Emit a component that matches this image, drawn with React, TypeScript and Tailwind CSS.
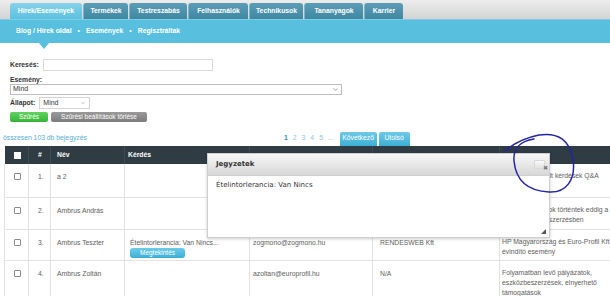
import { ChevronDown } from 'lucide-react'

const tabs = [
  { label: 'Hírek/Események', w: 'w-[72px]', active: true },
  { label: 'Termékek', w: 'w-[45px]' },
  { label: 'Testreszabás', w: 'w-[58px]' },
  { label: 'Felhasználók', w: 'w-[60px]' },
  { label: 'Technikusok', w: 'w-[54px]' },
  { label: 'Tananyagok', w: 'w-[59px]' },
  { label: 'Karrier', w: 'w-[39px]' },
]

const rows = [
  { n: '1.', name: 'a 2', q: '', email: '', company: '', topic: 'Gyakran ismételt kérdések Q&A', h: 'h-[33px]' },
  { n: '2.', name: 'Ambrus András', q: '', email: '', company: '', topic: 'Milyen változások történtek eddig a hazai eszközbeszerzésben', h: 'h-[32px]' },
  { n: '3.', name: 'Ambrus Teszter', q: 'Ételintorlerancia: Van Nincs...', email: 'zogmono@zogmono.hu', company: 'RENDESWEB Kft', topic: 'HP Magyarország és Euro-Profil Kft évindító esemény', h: 'h-[31px]', btn: true },
  { n: '4.', name: 'Ambrus Zoltán', q: '', email: 'azoltan@europrofil.hu', company: 'N/A', topic: 'Folyamatban levő pályázatok, eszközbeszerzések, elnyerhető támogatások', h: 'h-[33px]' },
  { n: '', name: '', q: '', email: '', company: '', topic: '', h: 'h-[33px]' },
]

function Checkbox({ white }: { white?: boolean }) {
  return (
    <span
      className={
        white
          ? 'block w-[7px] h-[7px] bg-white'
          : 'block w-[7px] h-[7px] border border-[#8a8a8a] rounded-[1px] bg-white'
      }
    />
  )
}

export default function App() {
  return (
    <div className="relative w-[610px] h-[296px] overflow-hidden bg-white text-[#444] font-['Liberation_Sans',Arial,sans-serif]">
      {/* top tab strip */}
      <div className="h-[19px] bg-gradient-to-b from-[#ededed] to-[#d2d3d4] flex items-end pl-[10px] gap-[1px]">
        {tabs.map(t => (
          <div
            key={t.label}
            className={
              (t.active
                ? 'bg-gradient-to-b from-[#86d3ea] to-[#5bc0de] '
                : 'bg-gradient-to-b from-[#5b9db6] to-[#3f87a2] border-l border-[#7fb3c6] ') +
              t.w +
              ' h-[16px] rounded-t-[3px] flex items-center justify-center text-white font-bold text-[6.8px]'
            }
          >
            {t.label}
          </div>
        ))}
      </div>

      {/* sub navigation */}
      <div className="relative h-[24px] bg-[#59bfdf] border-t border-[#7dcfe8] flex items-center pl-[16px] gap-[6px] text-white font-bold text-[6.8px]">
        <span>Blog / Hírek oldal</span>
        <span>•</span>
        <span>Események</span>
        <span>•</span>
        <span>Regisztráltak</span>
        <span className="absolute left-[39px] top-[23px] w-0 h-0 border-l-[5px] border-r-[5px] border-t-[6px] border-l-transparent border-r-transparent border-t-[#59bfdf]" />
      </div>

      {/* filters */}
      <div className="pl-[10px] pt-[16px] text-[6.8px] text-[#333]">
        <div className="flex items-center gap-[4px] h-[12px]">
          <span className="font-bold">Keresés:</span>
          <div className="w-[170px] h-[12px] border border-[#d9d9d9]" />
        </div>
        <div className="font-bold mt-[4px] leading-[9px]">Esemény:</div>
        <div className="w-[332px] h-[11px] border border-[#bdbdbd] flex items-center justify-between px-[2px] text-[7px] text-[#333]">
          <span>Mind</span>
          <ChevronDown size={7} strokeWidth={2} className="text-[#666]" />
        </div>
        <div className="flex items-center gap-[4px] mt-[2px] h-[12px]">
          <span className="font-bold">Állapot:</span>
          <div className="w-[51px] h-[12px] border border-[#d4d4d4] flex items-center justify-between px-[3px] text-[7px]">
            <span>Mind</span>
            <ChevronDown size={6} strokeWidth={2} className="text-[#888]" />
          </div>
        </div>
        <div className="flex items-center gap-[3px] mt-[3px]">
          <div className="w-[38px] h-[10px] rounded-[2px] bg-gradient-to-b from-[#5fd35f] to-[#37b437] text-white flex items-center justify-center text-[6.5px]">
            Szűrés
          </div>
          <div className="w-[96px] h-[10px] rounded-[2px] bg-gradient-to-b from-[#9a9a9a] to-[#7c7c7c] text-white flex items-center justify-center text-[6.5px]">
            Szűrési beállítások törlése
          </div>
        </div>
      </div>

      {/* count + pagination */}
      <div className="flex items-center h-[15px] mt-[9px] pl-[3px] text-[6.8px]">
        <span className="text-[#5aaed3] w-[281px]">összesen 103 db bejegyzés</span>
        <div className="flex items-center gap-[5px] text-[#8ac6e3]">
          <span className="text-[#2a8ac4] font-bold">1</span>
          <span>2</span>
          <span>3</span>
          <span>4</span>
          <span>5</span>
          <span>...</span>
        </div>
        <div className="ml-[6px] flex gap-[2px]">
          <div className="w-[37px] h-[14px] rounded-t-[2px] bg-gradient-to-b from-[#6fcae6] to-[#3aafd6] text-white flex items-center justify-center">
            Következő
          </div>
          <div className="w-[31px] h-[14px] rounded-t-[2px] bg-gradient-to-b from-[#6fcae6] to-[#3aafd6] text-white flex items-center justify-center">
            Utolsó
          </div>
        </div>
      </div>

      {/* table */}
      <div className="pl-[4px]">
        <table className="table-fixed w-[625px] border-collapse text-[6.8px] text-[#5e5e5e]">
          <colgroup>
            <col className="w-[24px]" />
            <col className="w-[22px]" />
            <col className="w-[74px]" />
            <col className="w-[125px]" />
            <col className="w-[123px]" />
            <col className="w-[127px]" />
            <col className="w-[130px]" />
          </colgroup>
          <thead>
            <tr className="h-[18px] bg-[#2f3c43] text-white font-bold text-left">
              <th className="pl-[9px] border-r border-[#3d4b52]"><Checkbox white /></th>
              <th className="pl-[9px] border-r border-[#3d4b52]">#</th>
              <th className="pl-[6px] border-r border-[#3d4b52]">Név</th>
              <th className="pl-[3px] border-r border-[#3d4b52]">Kérdés</th>
              <th className="border-r border-[#3d4b52]"></th>
              <th className="border-r border-[#3d4b52]"></th>
              <th></th>
            </tr>
          </thead>
          <tbody>
            {rows.map((r, i) => (
              <tr key={i} className={r.h + ' border-b border-[#e2e2e2] align-top'}>
                <td className="pl-[9px] pt-[9px] border-l border-r border-[#e2e2e2]"><Checkbox /></td>
                <td className="pl-[9px] pt-[8px] border-r border-[#e2e2e2] text-[#5e5e5e]">{r.n}</td>
                <td className="pl-[6px] pt-[8px] border-r border-[#e2e2e2] text-[#5e5e5e]">{r.name}</td>
                <td className="pl-[5px] pt-[8px] border-r border-[#e2e2e2] text-[#5e5e5e]">
                  {r.q && <div className="leading-[9px]">{r.q}</div>}
                  {r.btn && (
                    <div className="mt-[1px] w-[55px] h-[10px] rounded-[3px] bg-gradient-to-b from-[#6ccbe8] to-[#3aafd6] text-white flex items-center justify-center text-[6.5px]">
                      Megtekintés
                    </div>
                  )}
                </td>
                <td className="pl-[3px] pt-[8px] border-r border-[#e2e2e2] text-[#5e5e5e]">{r.email}</td>
                <td className="pl-[7px] pt-[8px] border-r border-[#e2e2e2] text-[#5e5e5e]">{r.company}</td>
                <td className="pl-[2px] pt-[7px] pr-[4px] leading-[10px] text-[#5e5e5e]">{r.topic}</td>
              </tr>
            ))}
          </tbody>
        </table>
      </div>

      {/* notes dialog */}
      <div className="absolute left-[207px] top-[153px] w-[343px] h-[85px] bg-white border border-[#cfcfcf] shadow-[0_1px_3px_rgba(0,0,0,0.2)] font-['DejaVu_Sans',Verdana,sans-serif]">
        <div className="relative h-[22px] bg-gradient-to-b from-[#f7f7f7] to-[#d8d8d8] border-b border-[#d0d0d0] flex items-center pl-[8px] text-[7px] font-bold text-[#333]">
          Jegyzetek
          <div className="absolute right-[4px] top-[6px] w-[11px] h-[9px] rounded-[1px] bg-gradient-to-b from-[#fafafa] to-[#e2e2e2] border border-[#d8d8d8]" />
          <span className="absolute right-[1px] top-[11px] text-[6px] leading-none text-[#777]">✖</span>
        </div>
        <div className="pl-[8px] pt-[4px] text-[7px] text-[#333]">Ételintorlerancia: Van Nincs</div>
        <svg className="absolute right-[3px] bottom-[3px]" width="5" height="5" viewBox="0 0 5 5">
          <path d="M5 0 L5 5 L0 5 Z" fill="#555" />
        </svg>
      </div>

      {/* hand-drawn annotation */}
      <svg className="absolute left-0 top-0 pointer-events-none" width="610" height="296" viewBox="0 0 610 296">
        <path
          d="M505 151 C514 143 524 138 539 135 C558 132 570 140 573 160 C576 180 566 193 549 192 C529 191 516 182 514 161 C513 149 520 141 534 139"
          fill="none"
          stroke="#2424a6"
          strokeWidth="1.5"
          strokeLinecap="round"
        />
      </svg>
    </div>
  )
}
